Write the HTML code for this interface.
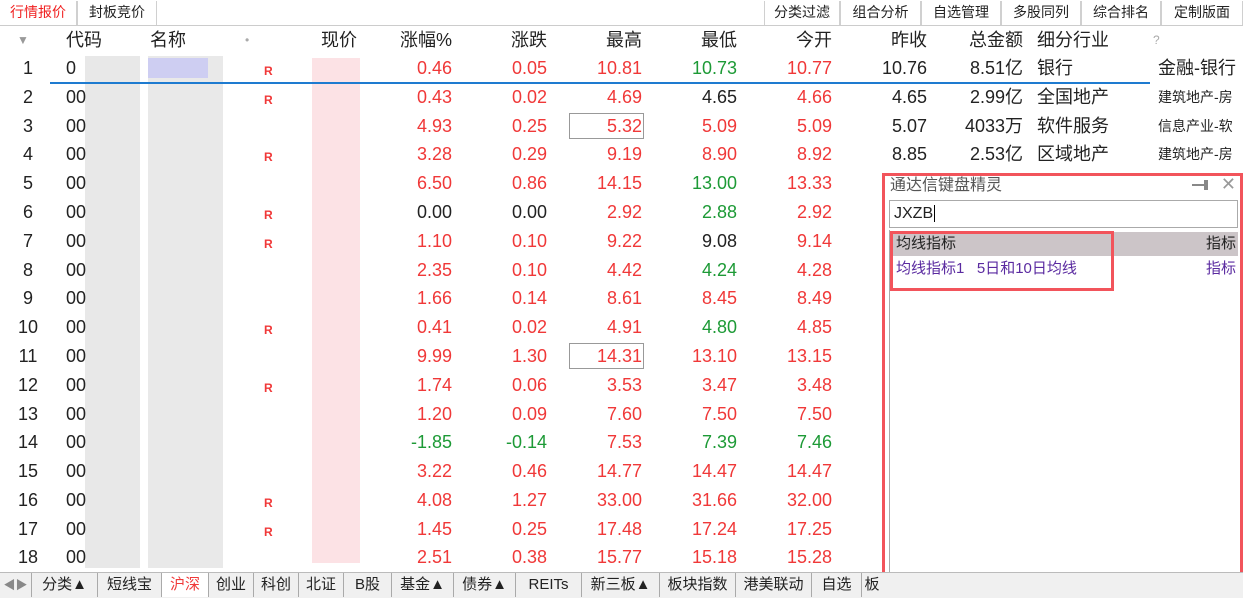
<!DOCTYPE html>
<html><head><meta charset="utf-8"><style>
*{margin:0;padding:0;box-sizing:border-box}
body{width:1243px;height:598px;overflow:hidden;background:#fff;font-family:"Liberation Sans","Noto Sans CJK SC",sans-serif;color:#222;position:relative}
.top{position:absolute;top:0;left:0;width:1243px;height:26px;border-bottom:1px solid #ccc;font-size:14px}
.tb{position:absolute;top:1px;height:24px;line-height:23px;text-align:center;border-left:1px solid #d0d0d0;border-right:1px solid #d0d0d0;background:#fff}
.hdr{position:absolute;top:27px;left:0;width:1243px;height:27px;font-size:18px;line-height:27px}
.row{position:absolute;left:0;width:1243px;height:29px;font-size:18px;line-height:29px}
.c{position:absolute;top:0;text-align:right;white-space:nowrap}
.r{color:#f03838}.g{color:#1d9a36}.k{color:#222}
.n{left:0;width:56px;text-align:center}
.cd{left:66px;text-align:left}
.R{left:264px;font-size:12px;font-weight:bold;color:#f03838;top:3px}
.p1{right:886px}.p2{right:791px}.p3{right:696px}.p4{right:601px}.p5{right:506px}.p6{right:411px}.p7{right:316px}.p8{right:220px}
.ind{left:1037px;text-align:left}
.sub{left:1158px;text-align:left;font-size:14px}
.blur{position:absolute;opacity:.75}
.pb{position:absolute;background:#fcdde0;opacity:.85}
.box{position:absolute;border:1px solid #999}
.tabs{position:absolute;top:572px;left:0;width:1243px;height:26px;background:#f0f0f0;border-top:1px solid #bbb;font-size:15px;line-height:24px}
.tab{position:absolute;top:0;height:24px;text-align:center;border-right:1px solid #aaa;color:#222}
</style></head><body>
<div class="top">
<div class="tb" style="left:0;width:77px;color:#f02020;border-left:none">行情报价</div>
<div class="tb" style="left:77px;width:80px">封板竞价</div>
<div class="tb" style="left:764px;width:76px">分类过滤</div>
<div class="tb" style="left:840px;width:81px">组合分析</div>
<div class="tb" style="left:921px;width:80px">自选管理</div>
<div class="tb" style="left:1001px;width:80px">多股同列</div>
<div class="tb" style="left:1081px;width:80px">综合排名</div>
<div class="tb" style="left:1161px;width:82px">定制版面</div>
</div>
<div class="hdr">
<span class="c" style="left:17px;color:#999;font-size:12px">▼</span>
<span class="c" style="left:66px">代码</span>
<span class="c" style="left:150px">名称</span>
<span class="c" style="left:245px;color:#aaa;font-size:12px">•</span>
<span class="c p1">现价</span><span class="c p2">涨幅%</span><span class="c p3">涨跌</span><span class="c p4">最高</span><span class="c p5">最低</span><span class="c p6">今开</span><span class="c p7">昨收</span><span class="c p8">总金额</span>
<span class="c ind">细分行业</span>
<span class="c" style="left:1153px;color:#aaa;font-size:12px">?</span>
</div>
<div class="blur" style="left:85px;top:56px;width:55px;height:512px;background:#e0e0e0"></div>
<div class="blur" style="left:148px;top:56px;width:75px;height:512px;background:#e2e2e2"></div>
<div class="blur" style="left:148px;top:58px;width:60px;height:20px;background:#c4c4f4"></div>
<div class="pb" style="left:312px;top:58px;width:48px;height:505px"></div>
<div style="position:absolute;left:50px;top:82px;width:1100px;height:2px;background:#1e7bd0"></div>

<div class="row" style="top:54px"><span class="c n">1</span><span class="c cd">0</span><span class="c R">R</span><span class="c p2 r">0.46</span><span class="c p3 r">0.05</span><span class="c p4 r">10.81</span><span class="c p5 g">10.73</span><span class="c p6 r">10.77</span><span class="c p7">10.76</span><span class="c p8">8.51亿</span><span class="c ind">银行</span><span class="c sub" style="font-size:18px">金融-银行</span></div>
<div class="row" style="top:83px"><span class="c n">2</span><span class="c cd">00</span><span class="c R">R</span><span class="c p2 r">0.43</span><span class="c p3 r">0.02</span><span class="c p4 r">4.69</span><span class="c p5">4.65</span><span class="c p6 r">4.66</span><span class="c p7">4.65</span><span class="c p8">2.99亿</span><span class="c ind">全国地产</span><span class="c sub">建筑地产-房</span></div>
<div class="row" style="top:112px"><span class="c n">3</span><span class="c cd">00</span><span class="c p2 r">4.93</span><span class="c p3 r">0.25</span><span class="c p4 r">5.32</span><span class="c p5 r">5.09</span><span class="c p6 r">5.09</span><span class="c p7">5.07</span><span class="c p8">4033万</span><span class="c ind">软件服务</span><span class="c sub">信息产业-软</span></div>
<div class="row" style="top:140px"><span class="c n">4</span><span class="c cd">00</span><span class="c R">R</span><span class="c p2 r">3.28</span><span class="c p3 r">0.29</span><span class="c p4 r">9.19</span><span class="c p5 r">8.90</span><span class="c p6 r">8.92</span><span class="c p7">8.85</span><span class="c p8">2.53亿</span><span class="c ind">区域地产</span><span class="c sub">建筑地产-房</span></div>
<div class="row" style="top:169px"><span class="c n">5</span><span class="c cd">00</span><span class="c p2 r">6.50</span><span class="c p3 r">0.86</span><span class="c p4 r">14.15</span><span class="c p5 g">13.00</span><span class="c p6 r">13.33</span></div>
<div class="row" style="top:198px"><span class="c n">6</span><span class="c cd">00</span><span class="c R">R</span><span class="c p2">0.00</span><span class="c p3">0.00</span><span class="c p4 r">2.92</span><span class="c p5 g">2.88</span><span class="c p6 r">2.92</span></div>
<div class="row" style="top:227px"><span class="c n">7</span><span class="c cd">00</span><span class="c R">R</span><span class="c p2 r">1.10</span><span class="c p3 r">0.10</span><span class="c p4 r">9.22</span><span class="c p5">9.08</span><span class="c p6 r">9.14</span></div>
<div class="row" style="top:256px"><span class="c n">8</span><span class="c cd">00</span><span class="c p2 r">2.35</span><span class="c p3 r">0.10</span><span class="c p4 r">4.42</span><span class="c p5 g">4.24</span><span class="c p6 r">4.28</span></div>
<div class="row" style="top:284px"><span class="c n">9</span><span class="c cd">00</span><span class="c p2 r">1.66</span><span class="c p3 r">0.14</span><span class="c p4 r">8.61</span><span class="c p5 r">8.45</span><span class="c p6 r">8.49</span></div>
<div class="row" style="top:313px"><span class="c n">10</span><span class="c cd">00</span><span class="c R">R</span><span class="c p2 r">0.41</span><span class="c p3 r">0.02</span><span class="c p4 r">4.91</span><span class="c p5 g">4.80</span><span class="c p6 r">4.85</span></div>
<div class="row" style="top:342px"><span class="c n">11</span><span class="c cd">00</span><span class="c p2 r">9.99</span><span class="c p3 r">1.30</span><span class="c p4 r">14.31</span><span class="c p5 r">13.10</span><span class="c p6 r">13.15</span></div>
<div class="row" style="top:371px"><span class="c n">12</span><span class="c cd">00</span><span class="c R">R</span><span class="c p2 r">1.74</span><span class="c p3 r">0.06</span><span class="c p4 r">3.53</span><span class="c p5 r">3.47</span><span class="c p6 r">3.48</span></div>
<div class="row" style="top:400px"><span class="c n">13</span><span class="c cd">00</span><span class="c p2 r">1.20</span><span class="c p3 r">0.09</span><span class="c p4 r">7.60</span><span class="c p5 r">7.50</span><span class="c p6 r">7.50</span></div>
<div class="row" style="top:428px"><span class="c n">14</span><span class="c cd">00</span><span class="c p2 g">-1.85</span><span class="c p3 g">-0.14</span><span class="c p4 r">7.53</span><span class="c p5 g">7.39</span><span class="c p6 g">7.46</span></div>
<div class="row" style="top:457px"><span class="c n">15</span><span class="c cd">00</span><span class="c p2 r">3.22</span><span class="c p3 r">0.46</span><span class="c p4 r">14.77</span><span class="c p5 r">14.47</span><span class="c p6 r">14.47</span></div>
<div class="row" style="top:486px"><span class="c n">16</span><span class="c cd">00</span><span class="c R">R</span><span class="c p2 r">4.08</span><span class="c p3 r">1.27</span><span class="c p4 r">33.00</span><span class="c p5 r">31.66</span><span class="c p6 r">32.00</span></div>
<div class="row" style="top:515px"><span class="c n">17</span><span class="c cd">00</span><span class="c R">R</span><span class="c p2 r">1.45</span><span class="c p3 r">0.25</span><span class="c p4 r">17.48</span><span class="c p5 r">17.24</span><span class="c p6 r">17.25</span></div>
<div class="row" style="top:543px"><span class="c n">18</span><span class="c cd">00</span><span class="c p2 r">2.51</span><span class="c p3 r">0.38</span><span class="c p4 r">15.77</span><span class="c p5 r">15.18</span><span class="c p6 r">15.28</span></div>
<div class="box" style="left:569px;top:113px;width:75px;height:26px"></div>
<div class="box" style="left:569px;top:343px;width:75px;height:26px"></div>

<div style="position:absolute;left:882px;top:173px;width:361px;height:420px;border:3px solid #f2545b;background:#fff">
 <div style="position:absolute;left:5px;top:0;font-size:16px;color:#555;line-height:20px">通达信键盘精灵</div>
 <div style="position:absolute;right:34px;top:8px;width:14px;height:2px;background:#888"></div>
 <div style="position:absolute;right:32px;top:4px;width:4px;height:10px;background:#888"></div>
 <div style="position:absolute;right:4px;top:-2px;font-size:18px;color:#999">✕</div>
 <div style="position:absolute;left:4px;top:24px;width:349px;height:28px;border:1px solid #aaa;font-size:16px;line-height:26px;padding-left:4px">JXZB<span style="border-left:1px solid #000;margin-left:1px"></span></div>
 <div style="position:absolute;left:6px;top:56px;width:347px;height:24px;background:#ccc5c8;font-size:15px;line-height:24px;padding-left:5px">均线指标<span style="position:absolute;right:2px">指标</span></div>
 <div style="position:absolute;left:6px;top:81px;width:347px;height:24px;font-size:15px;line-height:24px;padding-left:5px;color:#5a2aa0">均线指标1&nbsp;&nbsp;&nbsp;5日和10日均线<span style="position:absolute;right:2px">指标</span></div>
 <div style="position:absolute;left:5px;top:55px;width:224px;height:60px;border:3px solid #f2545b"></div>
 <div style="position:absolute;left:4px;top:54px;width:1px;height:360px;background:#aaa"></div>
</div>

<div class="tabs">
<span class="tab" style="left:0;width:32px;color:#888;font-size:12px">◀▶</span>
<span class="tab" style="left:32px;width:66px">分类▲</span>
<span class="tab" style="left:98px;width:64px">短线宝</span>
<span class="tab" style="left:162px;width:47px;color:#f03838;background:#fff">沪深</span>
<span class="tab" style="left:209px;width:45px">创业</span>
<span class="tab" style="left:254px;width:45px">科创</span>
<span class="tab" style="left:299px;width:45px">北证</span>
<span class="tab" style="left:344px;width:48px">B股</span>
<span class="tab" style="left:392px;width:62px">基金▲</span>
<span class="tab" style="left:454px;width:62px">债券▲</span>
<span class="tab" style="left:516px;width:66px">REITs</span>
<span class="tab" style="left:582px;width:78px">新三板▲</span>
<span class="tab" style="left:660px;width:76px">板块指数</span>
<span class="tab" style="left:736px;width:76px">港美联动</span>
<span class="tab" style="left:812px;width:50px">自选</span>
<span class="tab" style="left:862px;width:20px;border:none">板</span>
</div>
</body></html>
